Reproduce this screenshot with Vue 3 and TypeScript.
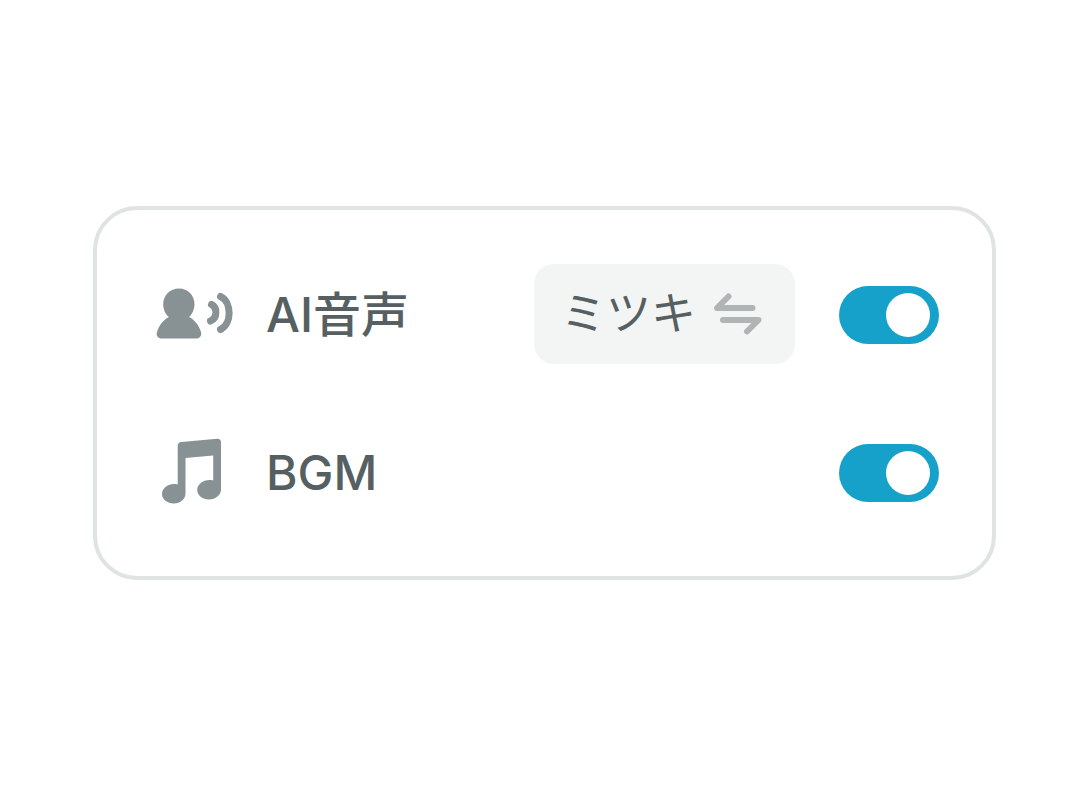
<script setup lang="ts">
import { ref } from 'vue'

const voiceOn = ref(true)
const bgmOn = ref(true)
</script>

<template>
  <main class="page">
    <section class="card">
      <div class="row">
        <svg class="icon" viewBox="0 0 80 80" aria-hidden="true">
          <path
            d="M25 13.500C33.800 13.500 40.500 20.300 40.500 29C40.500 34.500 38 39.500 35 42C40.500 44.500 45 50.500 47 57C48.200 61 45.500 63.500 42 63.500H8C4.300 63.500 1.700 61 3 57C5 50.500 9.500 44.500 15 42C11.500 39.500 9.200 34.500 9.200 29C9.200 20.300 16.200 13.500 25 13.500Z"
            fill="currentColor"
          />
          <g fill="none" stroke="currentColor" stroke-width="7" stroke-linecap="round">
            <path d="M57.500 29.500C63.500 32.500 63.500 43 56.500 46" />
            <path d="M66.500 21.500C78 27 78 49 66.500 54.500" />
          </g>
        </svg>
        <label class="label" for="voice">AI音声</label>
        <button class="voice" type="button">
          <span>ミツキ</span>
          <svg class="swap" viewBox="0 0 48 42" aria-hidden="true">
            <path d="M38.500 15H3L14.500 3.500M9 27H44.500L33 38.500" />
          </svg>
        </button>
        <input id="voice" v-model="voiceOn" class="toggle" type="checkbox" role="switch" />
      </div>
      <div class="row">
        <svg class="icon" viewBox="0 0 80 80" aria-hidden="true">
          <path
            d="M27.500 9L63 5.700C65.500 5.500 67 6.800 67 9V56.500C67 62 61.500 66.500 55 66.500C48.500 66.500 43.200 62.300 43.200 57C43.200 50.500 51 45.500 59.200 47.500V22.500L31.500 25V60.500C31.500 66 26.500 70.500 19.700 70.500C13.200 70.500 8 66.200 8 61C8 54.500 15.500 49.500 23.700 51.500V13C23.700 10.500 25 9.200 27.500 9Z"
            fill="currentColor"
          />
        </svg>
        <label class="label" for="bgm">BGM</label>
        <input id="bgm" v-model="bgmOn" class="toggle" type="checkbox" role="switch" />
      </div>
    </section>
  </main>
</template>

<style>
body {
  margin: 0;
  background: #fff;
}
</style>

<style scoped>
.page {
  box-sizing: border-box;
  min-height: 100vh;
  padding: 32px 90px 32px 93px;
  display: flex;
  align-items: center;
  background: #fff;
  font-family: Inter, "Noto Sans CJK JP", sans-serif;
  color: #566062;
}

.card {
  box-sizing: border-box;
  flex: 1;
  padding: 54px 53px 52px 57px;
  border: 4px solid #dfe3e3;
  border-radius: 44px;
  display: flex;
  flex-direction: column;
  gap: 56px;
}

.row {
  min-height: 102px;
  display: flex;
  align-items: center;
}

.icon {
  width: 80px;
  height: 80px;
  margin-right: 32px;
  flex: none;
  color: #889294;
}

.label {
  margin-right: auto;
  font-size: 48px;
  line-height: 60px;
  font-weight: 500;
  white-space: nowrap;
}

.voice {
  height: 100px;
  margin: 0 44px 0 0;
  padding: 0 33px 0 27px;
  border: 0;
  border-radius: 20px;
  align-self: flex-start;
  display: flex;
  align-items: center;
  gap: 18px;
  background: #f3f5f5;
  color: inherit;
  font: 400 45px/60px Inter, "Noto Sans CJK JP", sans-serif;
  white-space: nowrap;
  cursor: pointer;
}

.swap {
  width: 48px;
  height: 42px;
  flex: none;
  fill: none;
  stroke: #b1b4b5;
  stroke-width: 6;
  stroke-linecap: round;
  stroke-linejoin: round;
}

.toggle {
  appearance: none;
  box-sizing: border-box;
  width: 100px;
  height: 58px;
  margin: 0;
  padding: 7px 9px;
  flex: none;
  display: flex;
  align-items: center;
  border-radius: 29px;
  background: #c3c9ca;
  cursor: pointer;
}

.toggle::before {
  content: "";
  width: 44px;
  height: 44px;
  border-radius: 50%;
  background: #fff;
}

.toggle:checked {
  justify-content: flex-end;
  background: #15a1c9;
}
</style>
